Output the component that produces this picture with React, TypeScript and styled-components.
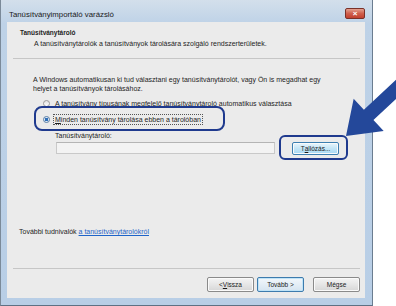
import styled, { createGlobalStyle } from "styled-components";

const GlobalStyle = createGlobalStyle`
  html, body {
    margin: 0;
    padding: 0;
    background: #fff;
  }
  body {
    font-family: "Liberation Sans", Arial, sans-serif;
    color: #1e1e1e;
  }
`;

const Stage = styled.div`
  position: relative;
  width: 396px;
  height: 306px;
  overflow: hidden;
`;

const Window = styled.div`
  width: 373px;
  height: 306px;
  box-sizing: border-box;
  display: flex;
  flex-direction: column;
  padding: 0 7px 7px 6px;
  background: linear-gradient(#d3dfeb, #bed2e7 24px, #b8cee6);
  border-left: 1px solid #7b8a99;
  border-right: 1px solid #6b7d90;
  border-bottom: 1px solid #5e7184;
`;

const TitleBar = styled.div`
  height: 22px;
  box-sizing: border-box;
  display: flex;
  align-items: flex-start;
  padding: 8px 0 0 2px;
`;

const Title = styled.span`
  margin-top: 1px;
  font-size: 7.8px;
  line-height: 12px;
  color: #1a1a1a;
`;

const CloseButton = styled.div`
  margin-left: auto;
  width: 20px;
  height: 11px;
  box-sizing: border-box;
  border: 1px solid #7a3128;
  border-radius: 2px;
  background: linear-gradient(#e3a08f, #cf5f4c 50%, #c2402e);
  display: flex;
  align-items: center;
  justify-content: center;
  color: #fff;
  font-size: 8px;
  line-height: 8px;
  font-weight: bold;
`;

const Client = styled.div`
  flex: 1;
  display: flex;
  flex-direction: column;
  background: #ebebeb;
  font-size: 7px;
`;

const Header = styled.div`
  padding: 6px 0 0 13px;
`;

const HeaderTitle = styled.div`
  font-weight: bold;
  line-height: 10px;
  font-size: 6.5px;
`;

const HeaderText = styled.div`
  margin: 1px 0 0 14px;
  line-height: 10px;
`;

const Separator = styled.div<{ $top: number }>`
  margin: ${(p) => p.$top}px 5px 0 6px;
  height: 1px;
  background: #c6c6c6;
`;

const Body = styled.div`
  margin-top: 16px;
  padding-left: 26px;
`;

const Paragraph = styled.p`
  margin: 0;
  line-height: 9px;
`;

const RadioList = styled.div`
  margin-top: 4px;
  padding-left: 10px;
  display: flex;
  flex-direction: column;
  gap: 4px;
`;

const RadioRow = styled.div`
  height: 12px;
  display: flex;
  align-items: center;
  gap: 4px;
`;

const Radio = styled.span<{ $checked?: boolean }>`
  width: 7px;
  height: 7px;
  box-sizing: border-box;
  border-radius: 50%;
  border: 1px solid ${(p) => (p.$checked ? "#5a7fa6" : "#9a9a9a")};
  background: ${(p) =>
    p.$checked
      ? "radial-gradient(circle, #2f6fb8 0 1.6px, #dfe9f4 2px)"
      : "linear-gradient(#e4e4e4, #fbfbfb)"};
`;

const RadioLabel = styled.span<{ $focused?: boolean }>`
  line-height: 9px;
  padding: 0 1px;
  outline: ${(p) => (p.$focused ? "1px dotted #555" : "none")};
`;

const Key = styled.span`
  text-decoration: underline;
`;

const FieldLabel = styled.div`
  margin-top: 6px;
  padding-left: 22px;
  line-height: 10px;
`;

const FieldRow = styled.div`
  margin-top: 1px;
  padding-left: 23px;
  display: flex;
  align-items: flex-start;
  gap: 17px;
`;

const Field = styled.div`
  width: 219px;
  height: 12px;
  box-sizing: border-box;
  border: 1px solid #c9c9c9;
  border-top-color: #b5b5b5;
  background: #f3f3f3;
`;

const Button = styled.div<{ $variant?: "hover" | "default" }>`
  width: 47px;
  height: 15px;
  box-sizing: border-box;
  border: 1px solid
    ${(p) =>
      p.$variant === "hover"
        ? "#3c7fb1"
        : p.$variant === "default"
          ? "#3d7bad"
          : "#8a8a8a"};
  border-radius: 2px;
  background: ${(p) =>
    p.$variant === "hover"
      ? "linear-gradient(#e9f6fd, #c4e5f6 50%, #a7d9f5)"
      : p.$variant === "default"
        ? "linear-gradient(#f2f7fb, #e4eef6 50%, #d5e4f0)"
        : "linear-gradient(#f4f4f4, #e6e6e6 50%, #d6d6d6)"};
  box-shadow: ${(p) =>
    p.$variant === "default" ? "inset 0 0 0 1px #bfe3f7" : "inset 0 0 0 1px #fafafa"};
  display: flex;
  align-items: center;
  justify-content: center;
  font-size: 6.5px;
  line-height: 9px;
  color: #1a1a1a;
`;

const BrowseButton = styled(Button)`
  height: 13px;
`;

const Footer = styled.div`
  margin-top: auto;
  padding-left: 12px;
  line-height: 10px;
`;

const Link = styled.a`
  color: #1e64c8;
  text-decoration: underline;
`;

const ButtonRow = styled.div`
  margin-top: 8px;
  padding: 0 5px 6px 0;
  display: flex;
  justify-content: flex-end;
  gap: 3px;
`;

const CancelButton = styled(Button)`
  margin-left: 6px;
`;

const Highlight = styled.div<{ $x: number; $y: number; $w: number; $h: number; $r: number }>`
  position: absolute;
  left: ${(p) => p.$x}px;
  top: ${(p) => p.$y}px;
  width: ${(p) => p.$w}px;
  height: ${(p) => p.$h}px;
  box-sizing: border-box;
  border: 2px solid #1f3a8e;
  border-radius: ${(p) => p.$r}px;
  pointer-events: none;
`;

const ArrowSvg = styled.svg`
  position: absolute;
  left: 326px;
  top: 66px;
  pointer-events: none;
`;

function Arrow() {
  return (
    <ArrowSvg width="70" height="80" viewBox="326 66 70 80">
      <g transform="translate(346 136) rotate(137)">
        <polygon
          points="0,0 -31,-22 -31,-7 -110,-7 -110,7 -31,7 -31,22"
          fill="#24489a"
        />
      </g>
    </ArrowSvg>
  );
}

export default function App() {
  return (
    <Stage>
      <GlobalStyle />
      <Window>
        <TitleBar>
          <Title>Tanúsítványimportáló varázsló</Title>
          <CloseButton>×</CloseButton>
        </TitleBar>
        <Client>
          <Header>
            <HeaderTitle>Tanúsítványtároló</HeaderTitle>
            <HeaderText>
              A tanúsítványtárolók a tanúsítványok tárolására szolgáló rendszerterületek.
            </HeaderText>
          </Header>
          <Separator $top={9} />
          <Body>
            <Paragraph>
              A Windows automatikusan ki tud választani egy tanúsítványtárolót, vagy Ön is megadhat egy
              <br />
              helyet a tanúsítványok tárolásához.
            </Paragraph>
            <RadioList>
              <RadioRow>
                <Radio />
                <RadioLabel>
                  A tanúsítvány <Key>t</Key>ípusának megfelelő tanúsítványtároló automatikus választása
                </RadioLabel>
              </RadioRow>
              <RadioRow>
                <Radio $checked />
                <RadioLabel $focused>
                  <Key>M</Key>inden tanúsítvány tárolása ebben a tárolóban
                </RadioLabel>
              </RadioRow>
            </RadioList>
            <FieldLabel>Tanúsítványtároló:</FieldLabel>
            <FieldRow>
              <Field />
              <BrowseButton $variant="hover">
                T<Key>a</Key>llózás...
              </BrowseButton>
            </FieldRow>
          </Body>
          <Footer>
            További tudnivalók <Link>a tanúsítványtárolókról</Link>
          </Footer>
          <Separator $top={31} />
          <ButtonRow>
            <Button>
              &lt; <Key>V</Key>issza
            </Button>
            <Button $variant="default">Tovább &gt;</Button>
            <CancelButton>Mégse</CancelButton>
          </ButtonRow>
        </Client>
      </Window>
      <Highlight $x={34} $y={106} $w={191} $h={25} $r={8} />
      <Highlight $x={279} $y={135} $w={69} $h={25} $r={6} />
      <Arrow />
    </Stage>
  );
}
